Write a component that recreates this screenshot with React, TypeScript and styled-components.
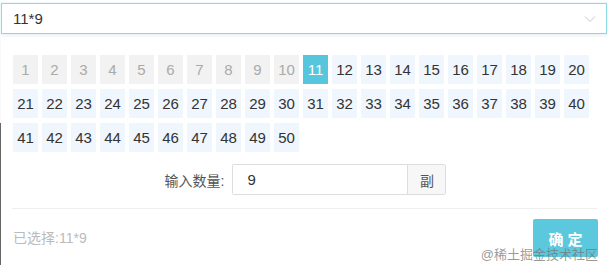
import { FC, useState } from 'react';
import styled, { createGlobalStyle } from 'styled-components';

const GlobalStyle = createGlobalStyle`
  html, body {
    margin: 0;
    padding: 0;
    background: #fff;
  }
  body {
    font-family: 'Liberation Sans', 'Noto Sans CJK SC', sans-serif;
    color: #333;
  }
`;

const Page = styled.div`
  position: relative;
  width: 608px;
  height: 265px;
  overflow: hidden;
  padding-top: 3px;
  box-sizing: border-box;
`;

const EdgeLine = styled.div`
  position: absolute;
  left: 0;
  top: 123px;
  bottom: 0;
  width: 1px;
  background: #6a6a6a;
`;

const Select = styled.div`
  display: flex;
  align-items: center;
  justify-content: space-between;
  margin-left: 1px;
  width: 606px;
  height: 31px;
  box-sizing: border-box;
  border: 1px solid #8fd8e6;
  box-shadow: 0 0 2px rgba(91, 200, 220, 0.35);
  padding: 0 10px 0 11px;
  font-size: 15px;
  color: #333;
`;

const Panel = styled.div`
  position: relative;
  margin-top: 3px;
  margin-left: 1px;
  width: 607px;
  background: #fff;
  box-shadow: 0 -1px 6px rgba(0, 0, 0, 0.06);
  padding: 18px 11px 0 12px;
  box-sizing: border-box;
  height: 231px;
`;

const Grid = styled.div`
  display: grid;
  grid-template-columns: repeat(20, 25px);
  grid-auto-rows: 29px;
  column-gap: 4px;
  row-gap: 5px;
`;

const Cell = styled.div<{ state: 'disabled' | 'active' | 'normal' }>`
  display: flex;
  align-items: center;
  justify-content: center;
  font-size: 15px;
  cursor: pointer;
  background: ${(p) =>
    p.state === 'active' ? '#55c6dc' : p.state === 'disabled' ? '#f2f2f2' : '#f0f6fd'};
  color: ${(p) =>
    p.state === 'active' ? '#fff' : p.state === 'disabled' ? '#aaa' : '#333'};
`;

const CountRow = styled.div`
  display: flex;
  align-items: center;
  justify-content: center;
  margin-top: 12px;
  padding-left: 1px;
`;

const Label = styled.span`
  font-size: 14px;
  color: #555;
  margin-right: 8px;
`;

const InputGroup = styled.div`
  display: flex;
  height: 31px;
  border: 1px solid #ddd;
  border-radius: 2px;
  box-sizing: border-box;
`;

const NumberInput = styled.input`
  appearance: none;
  border: none;
  outline: none;
  width: 174px;
  box-sizing: border-box;
  padding: 0 14px;
  font-size: 15px;
  font-family: inherit;
  color: #333;
  background: #fff;
`;

const Addon = styled.span`
  display: flex;
  align-items: center;
  justify-content: center;
  width: 37px;
  border-left: 1px solid #ddd;
  background: #f7f7f7;
  font-size: 14px;
  color: #555;
`;

const Divider = styled.div`
  height: 1px;
  background: #eee;
  margin: 13px 0 0 -1px;
  width: 585px;
`;

const Footer = styled.div`
  display: flex;
  align-items: center;
  justify-content: space-between;
  padding-top: 10px;
`;

const Picked = styled.span`
  font-size: 14px;
  color: #bbb;
  margin-top: -2px;
`;

const Confirm = styled.button`
  appearance: none;
  border: none;
  border-radius: 2px;
  width: 65px;
  height: 38px;
  margin-right: -1px;
  background: #5bc8dd;
  color: #fff;
  font-family: inherit;
  font-size: 15px;
  font-weight: bold;
  letter-spacing: 4px;
  padding: 0 0 0 4px;
  cursor: pointer;
`;

const Watermark = styled.span`
  position: absolute;
  right: 10px;
  top: 247px;
  font-size: 13px;
  line-height: 15px;
  color: rgba(120, 120, 120, 0.75);
  pointer-events: none;
`;

const Chevron: FC = () => (
  <svg width='12' height='8' viewBox='0 0 12 8' fill='none'>
    <path d='M1 1.5L6 6.5L11 1.5' stroke='#c8c8c8' strokeWidth='1' />
  </svg>
);

const App: FC = () => {
  const [row, setRow] = useState(11);
  const [count, setCount] = useState('9');
  const numbers = Array.from({ length: 50 }, (_, i) => i + 1);

  return (
    <Page>
      <GlobalStyle />
      <EdgeLine />
      <Select>
        <span>
          {row}*{count}
        </span>
        <Chevron />
      </Select>
      <Panel>
        <Grid>
          {numbers.map((n) => (
            <Cell
              key={n}
              state={n < 11 ? 'disabled' : n === row ? 'active' : 'normal'}
              onClick={() => n >= 11 && setRow(n)}
            >
              {n}
            </Cell>
          ))}
        </Grid>
        <CountRow>
          <Label>输入数量:</Label>
          <InputGroup>
            <NumberInput
              value={count}
              onChange={({ target: { value } }) => setCount(value)}
            />
            <Addon>副</Addon>
          </InputGroup>
        </CountRow>
        <Divider />
        <Footer>
          <Picked>
            已选择:{row}*{count}
          </Picked>
          <Confirm>确定</Confirm>
        </Footer>
      </Panel>
      <Watermark>@稀土掘金技术社区</Watermark>
    </Page>
  );
};

export default App;
